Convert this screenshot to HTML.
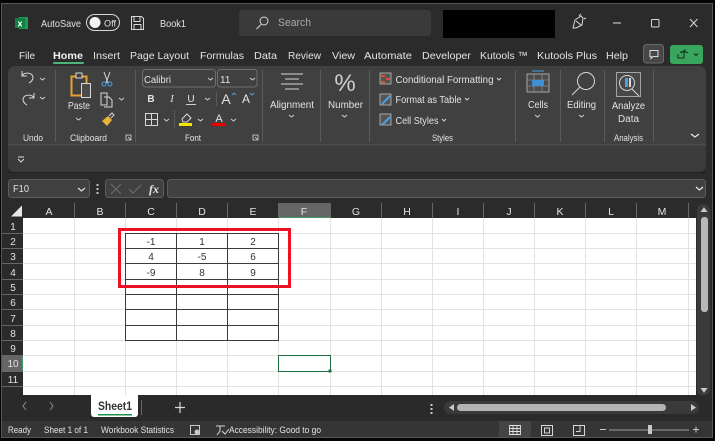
<!DOCTYPE html>
<html><head><meta charset="utf-8"><style>
html,body{margin:0;padding:0;background:#000;width:715px;height:441px;overflow:hidden}
svg{display:block;filter:blur(.3px)}
text{font-family:"Liberation Sans",sans-serif;fill:#e2e2e2;font-size:10.5px}
.c{text-anchor:middle}
.ic{fill:none;stroke:#d8d8d8;stroke-width:1}
.chev{fill:none;stroke:#d0d0d0;stroke-width:1}
</style></head><body>
<svg width="715" height="441" viewBox="0 0 715 441" xmlns="http://www.w3.org/2000/svg">
<rect width="715" height="441" fill="#050505"/>
<rect x="1.500" y="3.500" width="711" height="434" fill="#2b2b2b" stroke="#555" stroke-width="1"/>

<!-- title bar -->
<rect x="19" y="17" width="9" height="12" fill="#1f9a57"/>
<rect x="15" y="18" width="10" height="10" fill="#128045"/>
<text x="20" y="26.500" class="c" style="font-size:9px;font-weight:bold;fill:#fff">x</text>
<text x="41" y="27" textLength="40" lengthAdjust="spacingAndGlyphs">AutoSave</text>
<rect x="86.500" y="14.500" width="33" height="16" rx="8" fill="#2b2b2b" stroke="#d8d8d8"/>
<circle cx="95" cy="22.500" r="5.500" fill="#f2f2f2"/>
<text x="104" y="26.500" style="font-size:9px" textLength="12" lengthAdjust="spacingAndGlyphs">Off</text>
<path class="ic" d="M131.500 16.500h10l2 2v11h-12z M134 16.500v5h6v-5 M134 29.500v-5h7v5"/>
<text x="160" y="27" textLength="26" lengthAdjust="spacingAndGlyphs">Book1</text>
<rect x="239" y="10" width="192" height="26" rx="3" fill="#3a3a3a"/>
<circle cx="264" cy="21" r="4" class="ic"/><path class="ic" d="M261 24.500l-4.500 4.500"/>
<text x="278" y="26" style="fill:#a8a8a8;font-size:11px" textLength="33" lengthAdjust="spacingAndGlyphs">Search</text>
<rect x="443" y="10" width="112" height="28" fill="#000"/>
<path class="ic" d="M573 28l2-8 6-4 2 2-1 7-6 3z M579 16l2-2 M584 19l2-1 M576 21l5 4"/>
<rect x="613" y="22.500" width="8" height="1" fill="#e0e0e0"/>
<rect x="651.500" y="19.500" width="7.500" height="7.500" rx="1" class="ic"/>
<path class="ic" d="M690 19l7.500 8M697.500 19l-7.500 8"/>

<!-- tabs -->
<text x="19" y="59" textLength="16" lengthAdjust="spacingAndGlyphs">File</text>
<text x="53" y="59" style="font-weight:bold;fill:#f0f0f0" textLength="30" lengthAdjust="spacingAndGlyphs">Home</text>
<rect x="53" y="62" width="31" height="2" rx="1" fill="#4fb37c"/>
<text x="93" y="59" textLength="27" lengthAdjust="spacingAndGlyphs">Insert</text>
<text x="130" y="59" textLength="59" lengthAdjust="spacingAndGlyphs">Page Layout</text>
<text x="200" y="59" textLength="44" lengthAdjust="spacingAndGlyphs">Formulas</text>
<text x="254" y="59" textLength="23" lengthAdjust="spacingAndGlyphs">Data</text>
<text x="288" y="59" textLength="33" lengthAdjust="spacingAndGlyphs">Review</text>
<text x="332" y="59" textLength="23" lengthAdjust="spacingAndGlyphs">View</text>
<text x="364" y="59" textLength="48" lengthAdjust="spacingAndGlyphs">Automate</text>
<text x="422" y="59" textLength="49" lengthAdjust="spacingAndGlyphs">Developer</text>
<text x="480" y="59" textLength="48" lengthAdjust="spacingAndGlyphs">Kutools ™</text>
<text x="537" y="59" textLength="60" lengthAdjust="spacingAndGlyphs">Kutools Plus</text>
<text x="606" y="59" textLength="22" lengthAdjust="spacingAndGlyphs">Help</text>
<rect x="643.500" y="44.500" width="20" height="18.500" rx="3" fill="#474747" stroke="#6a6a6a"/>
<path class="ic" d="M650 50.500h8v6h-5l-2 2v-2h-1z"/>
<rect x="670" y="45" width="33" height="19" rx="3" fill="#3aa55d"/>
<path d="M680 52h4v6h-6v-4 M681 53l4-3v2l3 .5" fill="none" stroke="#12301d"/>
<path d="M694 53.500l2 2 2-2" fill="none" stroke="#12301d"/>

<!-- ribbon -->
<rect x="8" y="66" width="698" height="106" rx="7" fill="#404040"/>
<path d="M8 145h698v20a7 7 0 0 1-7 7H15a7 7 0 0 1-7-7z" fill="#3b3b3b"/>
<rect x="8" y="144" width="698" height="1.500" fill="#4c4c4c"/>
<rect x="8" y="172" width="698" height="1" fill="#222"/>
<!-- separators -->
<g fill="#5b5b5b">
<rect x="55" y="70" width="1" height="72"/><rect x="135" y="70" width="1" height="72"/>
<rect x="262" y="70" width="1" height="72"/><rect x="320" y="70" width="1" height="72"/>
<rect x="369" y="70" width="1" height="72"/><rect x="515" y="70" width="1" height="72"/>
<rect x="560" y="70" width="1" height="72"/><rect x="604" y="70" width="1" height="72"/>
<rect x="653" y="70" width="1" height="72"/>
</g>
<!-- undo -->
<path class="ic" d="M22 71v5h5 M22 76c2-4 10-4 11 1 0 3-2 5-4 6"/>
<path class="ic" d="M34 93v5h-5 M34 98c-2-4-10-4-11 1 0 3 2 5 4 6"/>
<path class="chev" d="M40 78l2.500 2 2.500-2M40 97l2.500 2 2.500-2"/>
<text x="23" y="141" style="font-size:9.500px" textLength="20" lengthAdjust="spacingAndGlyphs">Undo</text>
<!-- paste -->
<rect x="71.500" y="76.500" width="15" height="19" fill="none" stroke="#eaa030" stroke-width="2"/>
<rect x="76" y="73" width="6" height="5" fill="#404040" stroke="#d8d8d8"/>
<rect x="81.500" y="83.500" width="9" height="14" fill="#4b4b4b" stroke="#d8d8d8"/>
<text x="68" y="109" style="font-size:10px" textLength="22" lengthAdjust="spacingAndGlyphs">Paste</text>
<path class="chev" d="M76 118l2.500 2 2.500-2"/>
<path d="M104 72l4 11M110 72l-4 11" stroke="#d8d8d8" fill="none"/>
<circle cx="104" cy="84" r="2" fill="none" stroke="#4a9fe0"/><circle cx="110" cy="84" r="2" fill="none" stroke="#4a9fe0"/>
<path class="ic" d="M101 93h6v12h-6z M104 97h5l3 3v7h-8"/>
<path class="chev" d="M119 98l2.500 2 2.500-2"/>
<path d="M102 121l6-5 4 4-5 6z" fill="#e8b33c"/><path d="M109 116l3-3 2 2-3 3" stroke="#d8d8d8" fill="none"/>
<text x="70" y="141" style="font-size:9.500px" textLength="37" lengthAdjust="spacingAndGlyphs">Clipboard</text>
<path class="ic" style="stroke-width:.8" d="M126 135h5v5h-5z M128 137l3 3"/>
<!-- font -->
<rect x="142.500" y="69.500" width="73" height="17.500" rx="3" fill="#404040" stroke="#6e6e6e"/>
<text x="144" y="83" style="font-size:10px" textLength="27" lengthAdjust="spacingAndGlyphs">Calibri</text>
<path class="chev" d="M208 78l2.500 2 2.500-2"/>
<rect x="217.500" y="69.500" width="39.500" height="17.500" rx="3" fill="#404040" stroke="#6e6e6e"/>
<text x="220" y="83" style="font-size:10px">11</text>
<path class="chev" d="M250 78l2.500 2 2.500-2"/>
<text x="151" y="102" class="c" style="font-weight:bold;font-size:10px">B</text>
<text x="172" y="102" class="c" style="font-style:italic;font-family:'Liberation Serif',serif;font-size:10.500px">I</text>
<text x="191" y="102" class="c" style="font-size:10px">U</text><rect x="186" y="104" width="10" height="1" fill="#d0d0d0"/>
<path class="chev" d="M205 98l2.500 2 2.500-2"/>
<rect x="216" y="92" width="1" height="14" fill="#5b5b5b"/>
<text x="226" y="104" class="c" style="font-size:14px">A</text>
<path d="M232 95l2-2 2 2" stroke="#4a9fe0" fill="none"/>
<text x="246" y="103" class="c" style="font-size:12px">A</text>
<path d="M250 93l2 2 2-2" stroke="#4a9fe0" fill="none"/>
<path class="ic" d="M145.500 113.500h12v12h-12z M151.500 113.500v12 M145.500 119.500h12"/>
<path class="chev" d="M164 119l2.500 2 2.500-2"/>
<rect x="174" y="110" width="1" height="18" fill="#5b5b5b"/>
<path class="ic" d="M182 119l5-5 4 4-4 4h-4z"/>
<rect x="179" y="123" width="13" height="3" fill="#f2e500"/>
<path class="chev" d="M198 119l2.500 2 2.500-2"/>
<text x="219" y="122" class="c" style="font-size:11px">A</text>
<rect x="212" y="123" width="13" height="3" fill="#ea0000"/>
<path class="chev" d="M231 119l2.500 2 2.500-2"/>
<text x="185" y="141" style="font-size:9.500px" textLength="16" lengthAdjust="spacingAndGlyphs">Font</text>
<path class="ic" style="stroke-width:.8" d="M253 135h5v5h-5z M255 137l3 3"/>
<!-- alignment -->
<path class="ic" d="M281 74h22M285 79h14M281 84h22M285 89h14"/>
<text x="270" y="108" style="font-size:10px" textLength="44" lengthAdjust="spacingAndGlyphs">Alignment</text>
<path class="chev" d="M289 115l2.500 2 2.500-2"/>
<!-- number -->
<text x="345" y="91" class="c" style="font-size:24px;fill:#cfcfcf">%</text>
<text x="328" y="108" style="font-size:10px" textLength="35" lengthAdjust="spacingAndGlyphs">Number</text>
<path class="chev" d="M342 115l2.500 2 2.500-2"/>
<!-- styles -->
<rect x="380" y="73" width="11" height="11" fill="#555" stroke="#ccc" stroke-width=".7"/>
<rect x="381" y="75" width="4" height="2" fill="#e04b3f"/><rect x="386" y="78" width="4" height="2" fill="#e04b3f"/><rect x="381" y="81" width="4" height="2" fill="#e04b3f"/>
<text x="395.500" y="83" textLength="98" lengthAdjust="spacingAndGlyphs">Conditional Formatting</text><path class="chev" d="M497 78l2 2 2-2"/>
<rect x="380" y="94" width="11" height="11" fill="#555" stroke="#ccc" stroke-width=".7"/>
<path d="M382 104l8-8" stroke="#4a9fe0" stroke-width="2"/>
<text x="395.500" y="103" textLength="66" lengthAdjust="spacingAndGlyphs">Format as Table</text><path class="chev" d="M465 98l2 2 2-2"/>
<rect x="380" y="114" width="11" height="11" fill="#555" stroke="#ccc" stroke-width=".7"/>
<path d="M382 125l8-8" stroke="#4a9fe0" stroke-width="2"/>
<text x="395.500" y="124" textLength="43" lengthAdjust="spacingAndGlyphs">Cell Styles</text><path class="chev" d="M442 119l2 2 2-2"/>
<text x="432" y="141" style="font-size:9.500px" textLength="21" lengthAdjust="spacingAndGlyphs">Styles</text>
<!-- cells -->
<rect x="527" y="74" width="22" height="18" fill="#4a4a4a" stroke="#bdbdbd" stroke-width=".8"/>
<path d="M527 80h22M527 86h22M534 74v18M542 74v18" stroke="#a0a0a0" stroke-width=".6"/>
<rect x="532" y="80" width="12" height="6" fill="#3f8fd8"/>
<path d="M532 71h12" stroke="#4a9fe0"/>
<text x="528" y="108" style="font-size:10px" textLength="20" lengthAdjust="spacingAndGlyphs">Cells</text>
<path class="chev" d="M535 115l2.500 2 2.500-2"/>
<!-- editing -->
<circle cx="586" cy="81" r="8.500" class="ic"/><path class="ic" d="M580 87l-8 8"/>
<text x="567" y="108" style="font-size:10px" textLength="29" lengthAdjust="spacingAndGlyphs">Editing</text>
<path class="chev" d="M579 115l2.500 2 2.500-2"/>
<!-- analyze -->
<rect x="616.500" y="72.500" width="24" height="24" fill="#484848" stroke="#bdbdbd" stroke-width=".8"/>
<circle cx="627" cy="83" r="7.500" class="ic"/>
<rect x="625" y="78" width="3" height="9" fill="#4a9fe0"/><rect x="629" y="78" width="2" height="9" fill="#d8d8d8"/>
<path class="ic" d="M632 89l7 7"/>
<text x="612" y="109" style="font-size:10px" textLength="33" lengthAdjust="spacingAndGlyphs">Analyze</text>
<text x="618" y="122" style="font-size:10px" textLength="21" lengthAdjust="spacingAndGlyphs">Data</text>
<text x="614" y="141" style="font-size:9.500px" textLength="29" lengthAdjust="spacingAndGlyphs">Analysis</text>
<path d="M691 134l4 3 4-3" fill="none" stroke="#e8e8e8" stroke-width="1.200"/>
<path class="ic" d="M18 157h6M18 159l3 3 3-3"/>

<!-- formula bar -->
<rect x="8.500" y="179.500" width="81" height="18" rx="3" fill="#404040" stroke="#5c5c5c"/>
<text x="13" y="192" style="font-size:10px" textLength="16" lengthAdjust="spacingAndGlyphs">F10</text>
<path d="M78 188l3.500 3 3.500-3" fill="none" stroke="#e0e0e0" stroke-width="1.200"/>
<g fill="#c0c0c0"><rect x="96.500" y="184" width="2" height="2"/><rect x="96.500" y="188" width="2" height="2"/><rect x="96.500" y="192" width="2" height="2"/></g>
<rect x="105.500" y="179.500" width="58" height="18" rx="3" fill="#404040" stroke="#5c5c5c"/>
<path d="M111 184l10 10M121 184l-10 10" stroke="#6f6f6f" fill="none"/>
<path d="M129 189l4 4 8-8" stroke="#6f6f6f" fill="none"/>
<text x="154" y="193" class="c" style="font-family:'Liberation Serif',serif;font-style:italic;font-weight:bold;font-size:12px">fx</text>
<rect x="167.500" y="179.500" width="538" height="18" rx="3" fill="#404040" stroke="#5c5c5c"/>
<path d="M696 187l3.500 3 3.500-3" fill="none" stroke="#e8e8e8" stroke-width="1.200"/>

<!-- headers -->
<rect x="2" y="203" width="710" height="15" fill="#2b2b2b"/>
<rect x="2" y="203" width="21" height="192" fill="#2b2b2b"/>
<path d="M11 216.500L22 205.500V216.500Z" fill="#e8e8e8"/>
<rect x="278.500" y="203" width="52" height="15" fill="#666"/>
<rect x="278.500" y="217" width="52" height="1" fill="#3f9a62"/>
<g fill="#666">
<rect x="74" y="203" width="1" height="15"/><rect x="125" y="203" width="1" height="15"/><rect x="176" y="203" width="1" height="15"/><rect x="227" y="203" width="1" height="15"/><rect x="278" y="203" width="1" height="15"/><rect x="330" y="203" width="1" height="15"/><rect x="381" y="203" width="1" height="15"/><rect x="432" y="203" width="1" height="15"/><rect x="483" y="203" width="1" height="15"/><rect x="534" y="203" width="1" height="15"/><rect x="585" y="203" width="1" height="15"/><rect x="636" y="203" width="1" height="15"/><rect x="688" y="203" width="1" height="15"/>
</g>
<text x="49" y="215" class="c">A</text><text x="100" y="215" class="c">B</text><text x="151" y="215" class="c">C</text><text x="202" y="215" class="c">D</text><text x="253" y="215" class="c">E</text><text x="304" y="215" class="c">F</text><text x="356" y="215" class="c">G</text><text x="407" y="215" class="c">H</text><text x="458" y="215" class="c">I</text><text x="509" y="215" class="c">J</text><text x="560" y="215" class="c">K</text><text x="611" y="215" class="c">L</text><text x="662" y="215" class="c">M</text>
<!-- sheet -->
<rect x="23" y="218" width="673" height="177" fill="#fff"/>
<g fill="#e3e3e3">
<rect x="74" y="218" width="1" height="177"/><rect x="125" y="218" width="1" height="177"/><rect x="176" y="218" width="1" height="177"/><rect x="227" y="218" width="1" height="177"/><rect x="278" y="218" width="1" height="177"/><rect x="330" y="218" width="1" height="177"/><rect x="381" y="218" width="1" height="177"/><rect x="432" y="218" width="1" height="177"/><rect x="483" y="218" width="1" height="177"/><rect x="534" y="218" width="1" height="177"/><rect x="585" y="218" width="1" height="177"/><rect x="636" y="218" width="1" height="177"/><rect x="688" y="218" width="1" height="177"/>
<rect x="23" y="233" width="673" height="1"/><rect x="23" y="248" width="673" height="1"/><rect x="23" y="263" width="673" height="1"/><rect x="23" y="279" width="673" height="1"/><rect x="23" y="294" width="673" height="1"/><rect x="23" y="309" width="673" height="1"/><rect x="23" y="325" width="673" height="1"/><rect x="23" y="340" width="673" height="1"/><rect x="23" y="355" width="673" height="1"/><rect x="23" y="371" width="673" height="1"/><rect x="23" y="386" width="673" height="1"/>
</g>
<!-- row headers -->
<rect x="2" y="355.500" width="21" height="15.500" fill="#666"/><rect x="22" y="355.500" width="1" height="15.500" fill="#3f9a62"/>
<g fill="#666"><rect x="2" y="233" width="21" height="1"/><rect x="2" y="248" width="21" height="1"/><rect x="2" y="263" width="21" height="1"/><rect x="2" y="279" width="21" height="1"/><rect x="2" y="294" width="21" height="1"/><rect x="2" y="309" width="21" height="1"/><rect x="2" y="325" width="21" height="1"/><rect x="2" y="340" width="21" height="1"/><rect x="2" y="355" width="21" height="1"/><rect x="2" y="371" width="21" height="1"/><rect x="2" y="386" width="21" height="1"/></g>
<text x="13" y="230" class="c" style="font-size:10px">1</text><text x="13" y="245" class="c" style="font-size:10px">2</text><text x="13" y="260" class="c" style="font-size:10px">3</text><text x="13" y="276" class="c" style="font-size:10px">4</text><text x="13" y="291" class="c" style="font-size:10px">5</text><text x="13" y="306" class="c" style="font-size:10px">6</text><text x="13" y="322" class="c" style="font-size:10px">7</text><text x="13" y="337" class="c" style="font-size:10px">8</text><text x="13" y="352" class="c" style="font-size:10px">9</text><text x="13" y="367" class="c" style="font-size:10px">10</text><text x="13" y="383" class="c" style="font-size:10px">11</text>
<!-- table borders -->
<g fill="#3a3a3a">
<rect x="125" y="233" width="154" height="1"/><rect x="125" y="248" width="154" height="1"/><rect x="125" y="263" width="154" height="1"/><rect x="125" y="279" width="154" height="1"/><rect x="125" y="294" width="154" height="1"/><rect x="125" y="309" width="154" height="1"/><rect x="125" y="325" width="154" height="1"/><rect x="125" y="340" width="154" height="1"/>
<rect x="125" y="233" width="1" height="108"/><rect x="176" y="233" width="1" height="108"/><rect x="227" y="233" width="1" height="108"/><rect x="278" y="233" width="1" height="108"/>
</g>
<text x="151" y="245" class="c" style="fill:#333;font-size:10px">-1</text><text x="202" y="245" class="c" style="fill:#333;font-size:10px">1</text><text x="253" y="245" class="c" style="fill:#333;font-size:10px">2</text>
<text x="151" y="260" class="c" style="fill:#333;font-size:10px">4</text><text x="202" y="260" class="c" style="fill:#333;font-size:10px">-5</text><text x="253" y="260" class="c" style="fill:#333;font-size:10px">6</text>
<text x="151" y="276" class="c" style="fill:#333;font-size:10px">-9</text><text x="202" y="276" class="c" style="fill:#333;font-size:10px">8</text><text x="253" y="276" class="c" style="fill:#333;font-size:10px">9</text>
<rect x="119.500" y="229.500" width="170" height="57" fill="none" stroke="#ee1126" stroke-width="3"/>
<rect x="278.500" y="355.500" width="52" height="16" fill="none" stroke="#1e6e42" stroke-width="1"/>
<rect x="328.500" y="369.500" width="3" height="3" fill="#1e6e42"/>

<!-- vertical scrollbar -->
<rect x="696" y="203" width="16" height="192" fill="#2b2b2b"/>
<rect x="697" y="204" width="13" height="192" rx="6.500" fill="#3a3a3a"/>
<path d="M700.500 212l3.500-5 3.500 5z" fill="#c8c8c8"/>
<rect x="701" y="217" width="7" height="95" rx="3" fill="#b8b8b8"/>
<path d="M700.500 388l3.500 5 3.500-5z" fill="#c8c8c8"/>

<!-- tab bar -->
<rect x="2" y="395" width="710" height="26" fill="#2a2a2a"/>
<path d="M26 402l-3 4 3 4M50 402l3 4-3 4" fill="none" stroke="#8a8a8a"/>
<path d="M91 395v19a3 3 0 0 0 3 3h41a3 3 0 0 0 3-3v-19z" fill="#fff"/>
<text x="98" y="410" style="fill:#333;font-size:11.500px;font-weight:bold" textLength="34" lengthAdjust="spacingAndGlyphs">Sheet1</text>
<rect x="98" y="414" width="34" height="1.500" fill="#1f8f4e"/>
<rect x="141" y="400" width="1" height="15" fill="#666"/>
<path d="M180 402v11M175 407.500h10" stroke="#d8d8d8" stroke-width="1.200"/>
<g fill="#c8c8c8"><rect x="430.500" y="404" width="2" height="2"/><rect x="430.500" y="408" width="2" height="2"/><rect x="430.500" y="412" width="2" height="2"/></g>
<rect x="444" y="401" width="255" height="13" rx="6.500" fill="#3a3a3a"/>
<path d="M454 404l-5 3.500 5 3.500z M691 404l5 3.500-5 3.500z" fill="#c8c8c8"/>
<rect x="457" y="404" width="209" height="7" rx="3.500" fill="#b4b4b4"/>

<!-- status -->
<rect x="2" y="421" width="710" height="16" fill="#353535"/>
<text x="8" y="433" style="font-size:9px" textLength="23" lengthAdjust="spacingAndGlyphs">Ready</text>
<text x="44" y="433" style="font-size:9px" textLength="44" lengthAdjust="spacingAndGlyphs">Sheet 1 of 1</text>
<text x="101" y="433" style="font-size:9px" textLength="73" lengthAdjust="spacingAndGlyphs">Workbook Statistics</text>
<text x="229" y="433" style="font-size:9.200px" textLength="92" lengthAdjust="spacingAndGlyphs">Accessibility: Good to go</text>
<rect x="190.500" y="425.500" width="9" height="9" fill="none" stroke="#c8c8c8"/><circle cx="197" cy="432" r="2.500" fill="#c8c8c8"/>
<path class="ic" d="M216 426h9M220 426v5l-3 4M222 431l3 3 4-5"/>
<rect x="499" y="421" width="32" height="16" fill="#444"/>
<path d="M509.500 425.500h11v9h-11z M513 425.500v9M517 425.500v9M509.500 428.500h11M509.500 431.500h11" fill="none" stroke="#e0e0e0" stroke-width=".9"/>
<path class="ic" d="M541.500 425.500h11v10h-11z M544.500 428h5v5h-5z"/>
<path class="ic" d="M573.500 425.500h11v10h-11z M580 425.500v6h-4"/>
<rect x="600" y="429" width="6" height="1" fill="#c8c8c8"/>
<rect x="609" y="429.500" width="80" height="1" fill="#9a9a9a"/>
<rect x="648" y="425" width="4" height="9" fill="#c8c8c8"/>
<path d="M693 429.500h6M696 426.500v6" stroke="#c8c8c8"/>
</svg>
</body></html>
